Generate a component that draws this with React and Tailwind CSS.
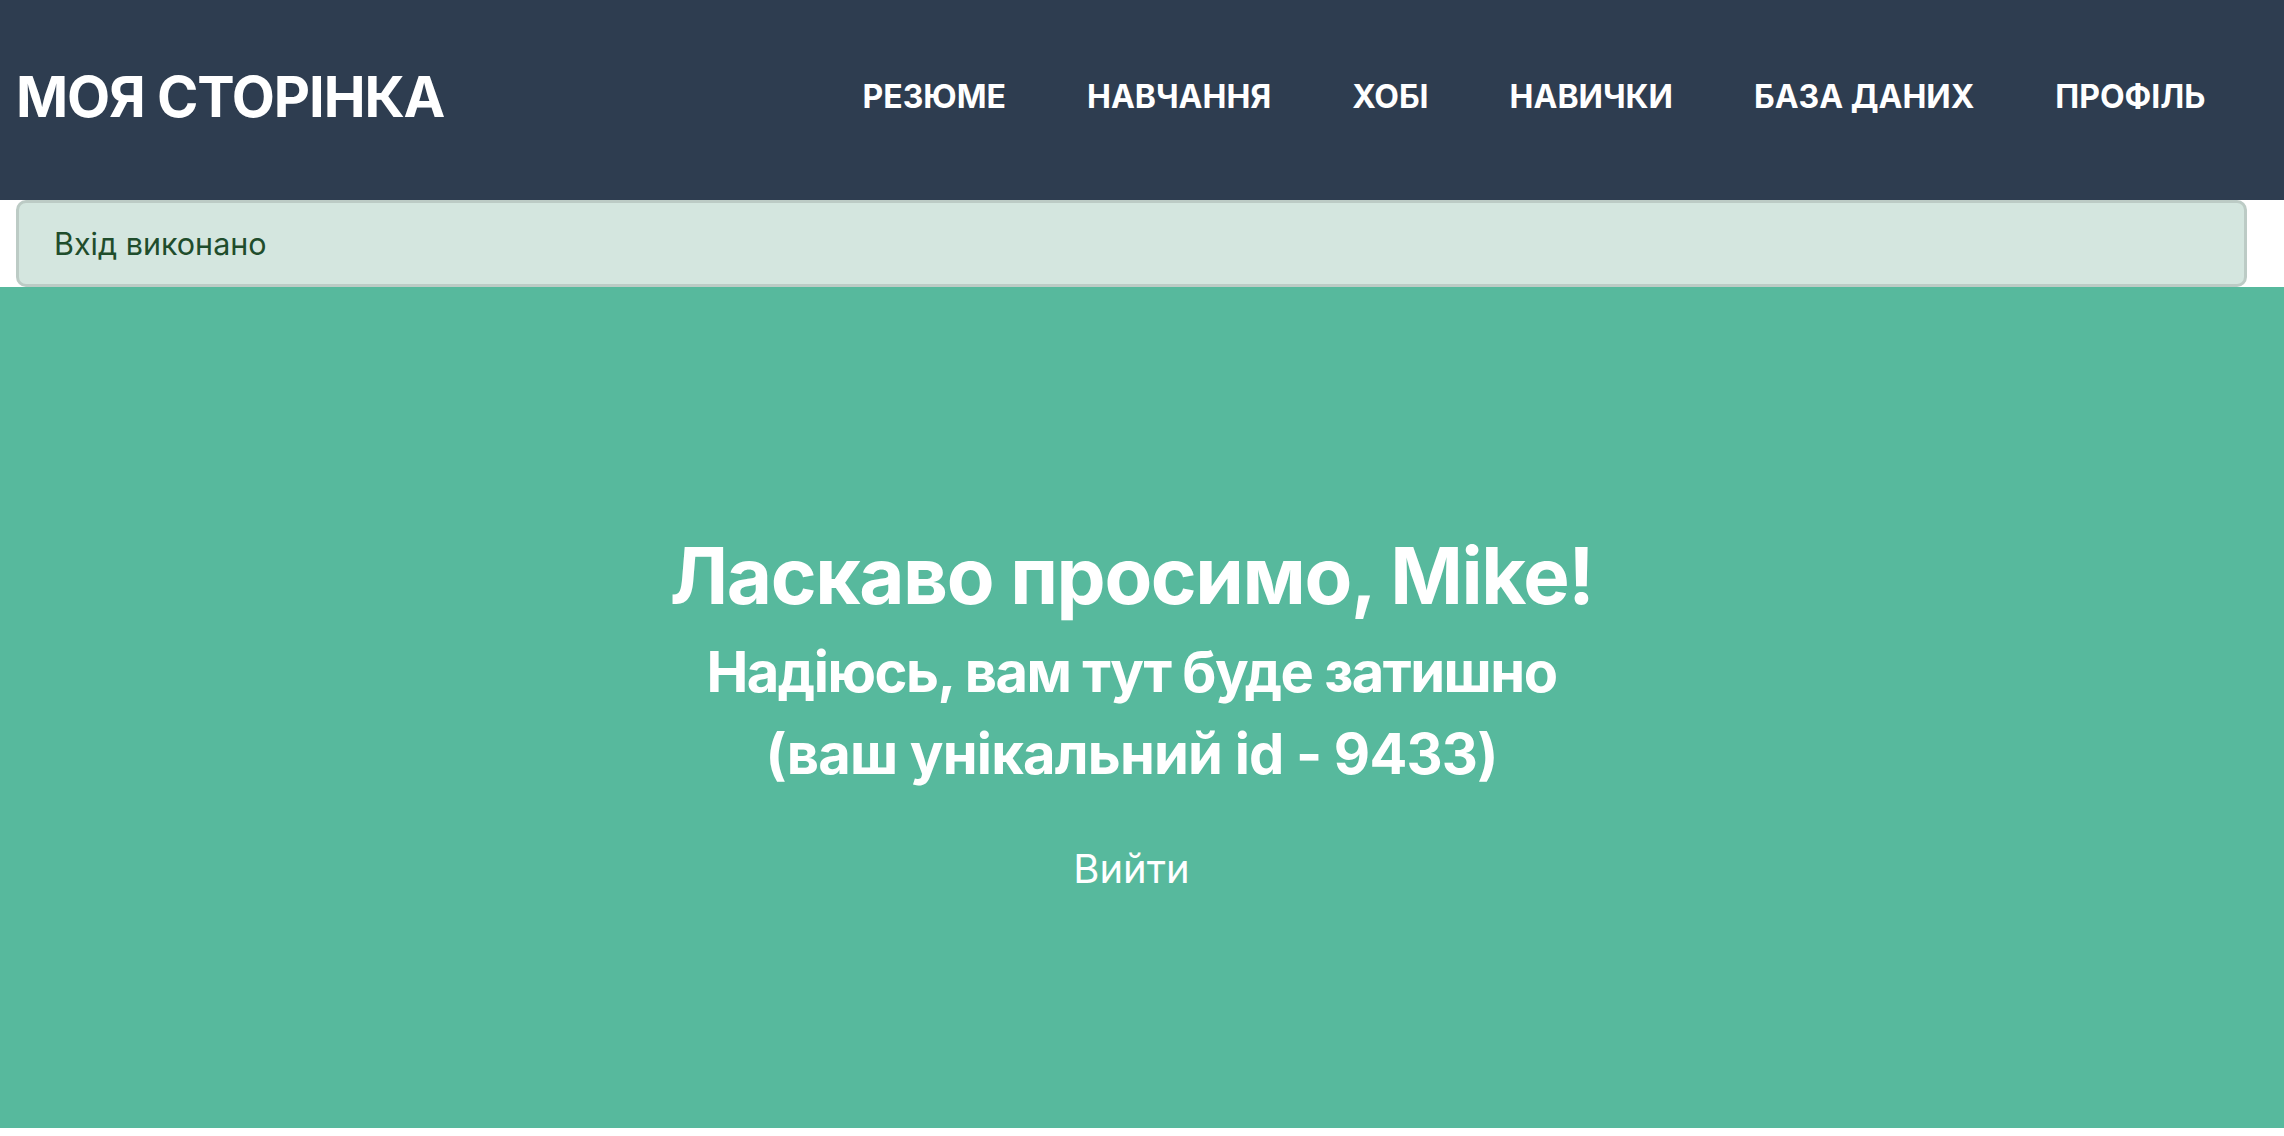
const navItems = ["РЕЗЮМЕ", "НАВЧАННЯ", "ХОБІ", "НАВИЧКИ", "БАЗА ДАНИХ", "ПРОФІЛЬ"];

function Header() {
  return (
    <header className="h-[200px] bg-[#2e3d50] flex items-center justify-between pl-[16px] pr-[38px] pb-[7px]">
      <h1 className="text-[56px] font-bold text-white leading-none tracking-[-1.1px]">МОЯ СТОРІНКА</h1>
      <nav>
        <ul className="flex items-center">
          {navItems.map((item) => (
            <li key={item}>
              <a href="#" className="block px-[40.5px] text-[32px] font-bold text-white leading-none">
                {item}
              </a>
            </li>
          ))}
        </ul>
      </nav>
    </header>
  );
}

export default function App() {
  return (
    <div className="min-h-screen bg-white font-['Inter','Noto_Sans',sans-serif]">
      <Header />
      <div className="ml-[16px] mr-[37px] h-[87px] flex items-center pl-[35px] bg-[#d4e6df] border-[3px] border-[#bccbc5] rounded-[10px] text-[30.5px] text-[#1f4d2c]">
        Вхід виконано
      </div>
      <section className="h-[841px] bg-[#57b99d] flex flex-col items-center justify-center pr-[21px] pt-[6px] text-white text-center">
        <h2 className="text-[78px] font-bold leading-[94px] tracking-[-1.4px]">Ласкаво просимо, Mike!</h2>
        <h3 className="mt-[8px] text-[56px] font-bold leading-[82px] tracking-[-1.5px]">Надіюсь, вам тут буде затишно</h3>
        <h3 className="text-[56px] font-bold leading-[82px] tracking-[-0.8px]">(ваш унікальний id - 9433)</h3>
        <button className="mt-[50px] text-[40px] leading-[48px] text-white">Вийти</button>
      </section>
    </div>
  );
}
